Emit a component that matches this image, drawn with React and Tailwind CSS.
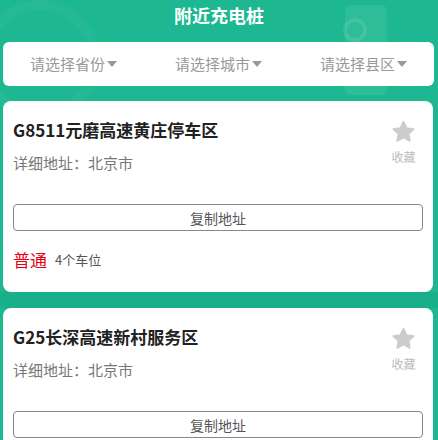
import React from 'react';

const font = { fontFamily: '"Noto Sans CJK SC", "Noto Sans", sans-serif' };

const stations = [
  { name: 'G8511元磨高速黄庄停车区', addr: '北京市', type: '普通', spots: 4 },
  { name: 'G25长深高速新村服务区', addr: '北京市', type: '普通', spots: 4 },
];

function Star() {
  return (
    <svg width="27" height="26" viewBox="0 0 24 24">
      <path
        d="M12 2.5l2.9 6 6.5.8-4.8 4.5 1.2 6.5L12 17.1l-5.8 3.2 1.2-6.5-4.8-4.5 6.5-.8z"
        fill="#cccccc"
        stroke="#cccccc"
        strokeWidth="1.6"
        strokeLinejoin="round"
      />
    </svg>
  );
}

function Caret() {
  return (
    <svg width="10" height="6" viewBox="0 0 10 6" className="ml-[2px]">
      <path d="M0 0h10L5 6z" fill="#999" />
    </svg>
  );
}

function StationCard({ s }) {
  return (
    <div className="bg-white rounded-[8px] ml-[3px] w-[430px] px-[10px] pt-[16px] pb-[20px] mb-[16px]">
      <div className="flex justify-between">
        <div>
          <div className="text-[17px] font-bold text-[#222] leading-[26px]">{s.name}</div>
          <div className="text-[15px] text-[#777] leading-[22px] mt-[9px]">详细地址：{s.addr}</div>
        </div>
        <div className="flex flex-col items-center mr-[6px] pt-[2px]">
          <Star />
          <span className="text-[12px] text-[#bbb] leading-[16px] mt-[4px]">收藏</span>
        </div>
      </div>
      <button className="mt-[30px] w-full h-[27px] border border-[#888] rounded-[4px] text-[14px] text-[#555] leading-none">
        复制地址
      </button>
      <div className="flex items-center mt-[17px] h-[24px]">
        <span className="text-[17px] text-[#e60012]">{s.type}</span>
        <span className="text-[13px] text-[#555] ml-[8px]">{s.spots}个车位</span>
      </div>
    </div>
  );
}

export default function App() {
  return (
    <div className="relative w-[438px] h-[440px] overflow-hidden bg-[#1db891]" style={font}>
      <svg className="absolute left-0 top-0" width="438" height="440">
        <rect x="345" y="5" width="42" height="90" rx="6" fill="#ffffff" opacity="0.08" />
        <circle cx="355" cy="30" r="10" fill="none" stroke="#ffffff" strokeWidth="4" opacity="0.1" />
        <circle cx="40" cy="60" r="55" fill="none" stroke="#ffffff" strokeWidth="10" opacity="0.04" />
        <rect x="0" y="292" width="438" height="16" fill="#18a985" opacity="0.6" />
      </svg>
      <div className="relative">
        <div className="h-[30px] flex items-center justify-center text-white text-[18px] font-bold">
          附近充电桩
        </div>
        <div className="mt-[12px] ml-[3px] w-[431px] h-[44px] bg-white rounded-[6px] flex items-center justify-between px-[27px] text-[15px] text-[#999]">
          <span className="flex items-center">请选择省份<Caret /></span>
          <span className="flex items-center">请选择城市<Caret /></span>
          <span className="flex items-center">请选择县区<Caret /></span>
        </div>
        <div className="mt-[15px]">
          {stations.map((s) => (
            <StationCard key={s.name} s={s} />
          ))}
        </div>
      </div>
    </div>
  );
}
